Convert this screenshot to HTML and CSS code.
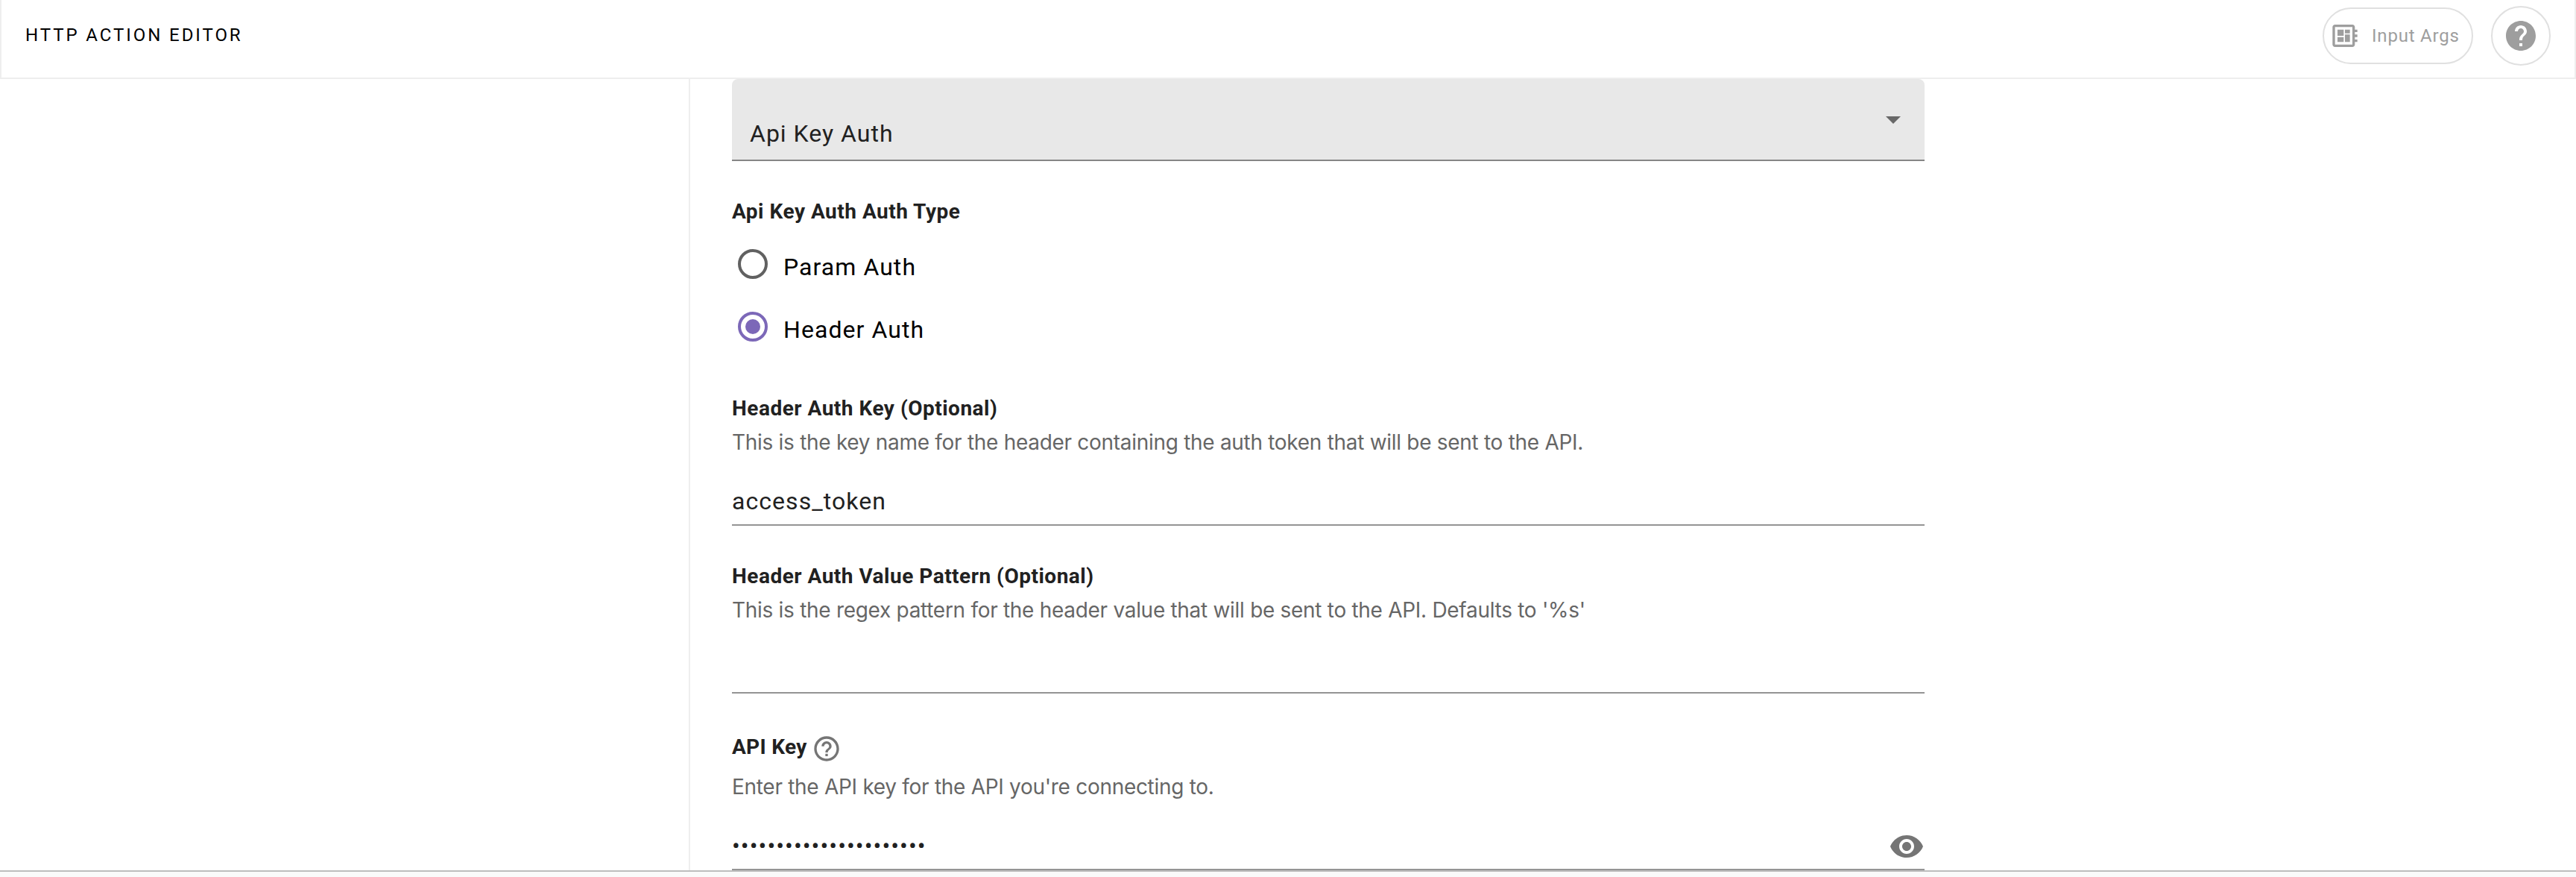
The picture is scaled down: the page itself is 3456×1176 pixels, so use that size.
FILE: index.html
```
<!DOCTYPE html>
<html lang="en">
<head>
<meta charset="utf-8">
<title>HTTP Action Editor</title>
<link rel="stylesheet" href="styles.css">
</head>
<body>
<header class="toolbar">
  <h1 class="toolbar-title">HTTP ACTION EDITOR</h1>
  <div class="toolbar-actions">
    <button class="pill" type="button">
      <svg class="icon-board" viewBox="0 0 24 24"><path d="M22 9V7h-2V5c0-1.100-.9-2-2-2H4c-1.100 0-2 .9-2 2v14c0 1.100.9 2 2 2h14c1.100 0 2-.9 2-2v-2h2v-2h-2v-2h2v-2h-2V9h2zm-4 10H4V5h14v14zM6 13h5v4H6zM12 7h4v3h-4zM6 7h5v5H6zM12 11h4v6h-4z"/></svg>
      <span>Input Args</span>
    </button>
    <button class="round" type="button" aria-label="Help">
      <svg class="icon-help" viewBox="0 0 24 24"><path d="M12 2C6.480 2 2 6.480 2 12s4.480 10 10 10 10-4.480 10-10S17.520 2 12 2zm1 17h-2v-2h2v2zm2.070-7.750l-.9.920C13.450 12.900 13 13.500 13 15h-2v-.5c0-1.100.45-2.100 1.170-2.830l1.240-1.260c.37-.36.59-.86.59-1.410 0-1.100-.9-2-2-2s-2 .9-2 2H8c0-2.210 1.790-4 4-4s4 1.790 4 4c0 .88-.36 1.680-.93 2.250z"/></svg>
    </button>
  </div>
</header>

<main class="workspace">
  <section class="panel">
    <div class="select">
      <span>Api Key Auth</span>
      <svg class="caret" viewBox="0 0 20 10"><path d="M0 0h20L10 10z"/></svg>
    </div>

    <h2 class="label label-type">Api Key Auth Auth Type</h2>
    <div class="radios">
      <div class="radio"><i class="dot"></i><span>Param Auth</span></div>
      <div class="radio"><i class="dot dot-on"></i><span>Header Auth</span></div>
    </div>

    <h2 class="label label-key">Header Auth Key (Optional)</h2>
    <p class="hint">This is the key name for the header containing the auth token that will be sent to the API.</p>
    <div class="field">access_token</div>

    <h2 class="label label-pattern">Header Auth Value Pattern (Optional)</h2>
    <p class="hint">This is the regex pattern for the header value that will be sent to the API. Defaults to '%s'</p>
    <div class="field"></div>

    <h2 class="label label-api"><span>API Key</span>
      <svg class="icon-info" viewBox="0 0 24 24"><path d="M11 18h2v-2h-2v2zm1-16C6.480 2 2 6.480 2 12s4.480 10 10 10 10-4.480 10-10S17.520 2 12 2zm0 18c-4.410 0-8-3.590-8-8s3.590-8 8-8 8 3.590 8 8-3.590 8-8 8zm0-14c-2.210 0-4 1.790-4 4h2c0-1.100.9-2 2-2s2 .9 2 2c0 2-3 1.750-3 5h2c0-2.250 3-2.500 3-5 0-2.210-1.790-4-4-4z"/></svg>
    </h2>
    <p class="hint hint-api">Enter the API key for the API you're connecting to.</p>
    <div class="field field-secret">
      <span>••••••••••••••••••••••</span>
      <svg class="icon-eye" viewBox="0 0 24 24"><path d="M12 4.500C7 4.500 2.730 7.610 1 12c1.730 4.390 6 7.500 11 7.500s9.270-3.110 11-7.500c-1.730-4.390-6-7.500-11-7.500zM12 17c-2.760 0-5-2.240-5-5s2.240-5 5-5 5 2.240 5 5-2.240 5-5 5zm0-8c-1.660 0-3 1.340-3 3s1.340 3 3 3 3-1.340 3-3-1.340-3-3-3z"/></svg>
    </div>
  </section>
</main>
<footer class="statusbar"></footer>
</body>
</html>
```
FILE: styles.css
```
* {
  box-sizing: border-box;
  margin: 0;
  padding: 0;
}

body {
  display: flex;
  flex-direction: column;
  height: 1176px;
  overflow: hidden;
  background: #fff;
  color: #212121;
  font-family: Roboto, sans-serif;
}

svg {
  display: block;
  flex: none;
  fill: currentColor;
}

/* Top toolbar */
.toolbar {
  display: flex;
  flex: none;
  justify-content: space-between;
  align-items: flex-start;
  height: 106px;
  padding: 0 32px;
  border: 2px solid #eee;
  border-top: 0;
}

.toolbar-title {
  margin-top: 33px;
  color: #000;
  font-size: 24px;
  font-weight: 400;
  line-height: 28px;
  letter-spacing: 2.930px;
}

.toolbar-actions {
  display: flex;
  align-items: center;
  gap: 24px;
  padding-top: 8px;
}

.pill,
.round {
  display: flex;
  align-items: center;
  border: 2px solid #e0e0e0;
  background: #fff;
  color: #9e9e9e;
}

.pill {
  gap: 16px;
  width: 202px;
  height: 76px;
  padding-left: 8px;
  border-radius: 38px;
  font: 400 24px/28px Roboto, sans-serif;
  letter-spacing: 0.800px;
  white-space: nowrap;
}

.icon-board {
  width: 40px;
  height: 40px;
}

.round {
  justify-content: center;
  width: 80px;
  height: 80px;
  border-radius: 50%;
}

.icon-help {
  width: 48px;
  height: 48px;
}

/* Form panel */
.workspace {
  flex: none;
  height: 1061px;
  padding-left: 924px;
}

.panel {
  width: 1658px;
  height: 1061px;
  padding-left: 56px;
  border-left: 2px solid #eee;
}

.select {
  display: flex;
  justify-content: space-between;
  height: 110px;
  padding: 54px 32px 0 24px;
  border-bottom: 2px solid #868686;
  border-radius: 8px 8px 0 0;
  background: #e8e8e8;
  font-size: 32px;
  line-height: 38px;
  letter-spacing: 1px;
}

.caret {
  width: 20px;
  height: 10px;
  margin-top: -4px;
  color: #686868;
}

.label {
  font-size: 28px;
  font-weight: 700;
  line-height: 33px;
  letter-spacing: 0.500px;
}

.label-type {
  margin-top: 51px;
}

.label-key {
  margin-top: 69px;
}

.label-pattern {
  margin-top: 51px;
}

.label-api {
  display: flex;
  align-items: flex-start;
  gap: 5px;
  height: 33px;
  margin-top: 55px;
}

.label-api span {
  width: 102px;
  letter-spacing: 0.300px;
}

.icon-info {
  width: 40px;
  height: 40px;
  margin-top: -1px;
  color: #757575;
}

.radios {
  display: flex;
  flex-direction: column;
  gap: 40px;
  margin-top: 34px;
  padding-left: 8px;
}

.radio {
  display: flex;
  gap: 21px;
  height: 44px;
  color: #000;
  font-size: 32px;
  line-height: 38px;
  letter-spacing: 1.060px;
}

.radio span {
  padding-top: 5px;
}

.dot {
  display: grid;
  place-items: center;
  width: 40px;
  height: 40px;
  border: 4px solid #616161;
  border-radius: 50%;
}

.dot-on {
  border-color: #7c68b8;
}

.dot-on::after {
  content: "";
  width: 20px;
  height: 20px;
  border-radius: 50%;
  background: #7c68b8;
}

.hint {
  margin-top: 12px;
  color: #666;
  font-family: Inter, sans-serif;
  font-size: 28px;
  line-height: 34px;
  letter-spacing: -0.295px;
  white-space: nowrap;
}

.hint-api {
  margin-top: 20px;
}

.field {
  height: 52px;
  margin-top: 43px;
  border-bottom: 2px solid #949494;
  font-size: 32px;
  line-height: 38px;
  letter-spacing: 1.050px;
}

.field-secret {
  display: flex;
  justify-content: space-between;
}

.icon-eye {
  width: 48px;
  height: 48px;
  margin-top: -4px;
  color: #757575;
}

/* Bottom edge of the editor */
.statusbar {
  flex: none;
  height: 9px;
  border-top: 2px solid #bdbdbd;
  background: #fafafa;
}
```
